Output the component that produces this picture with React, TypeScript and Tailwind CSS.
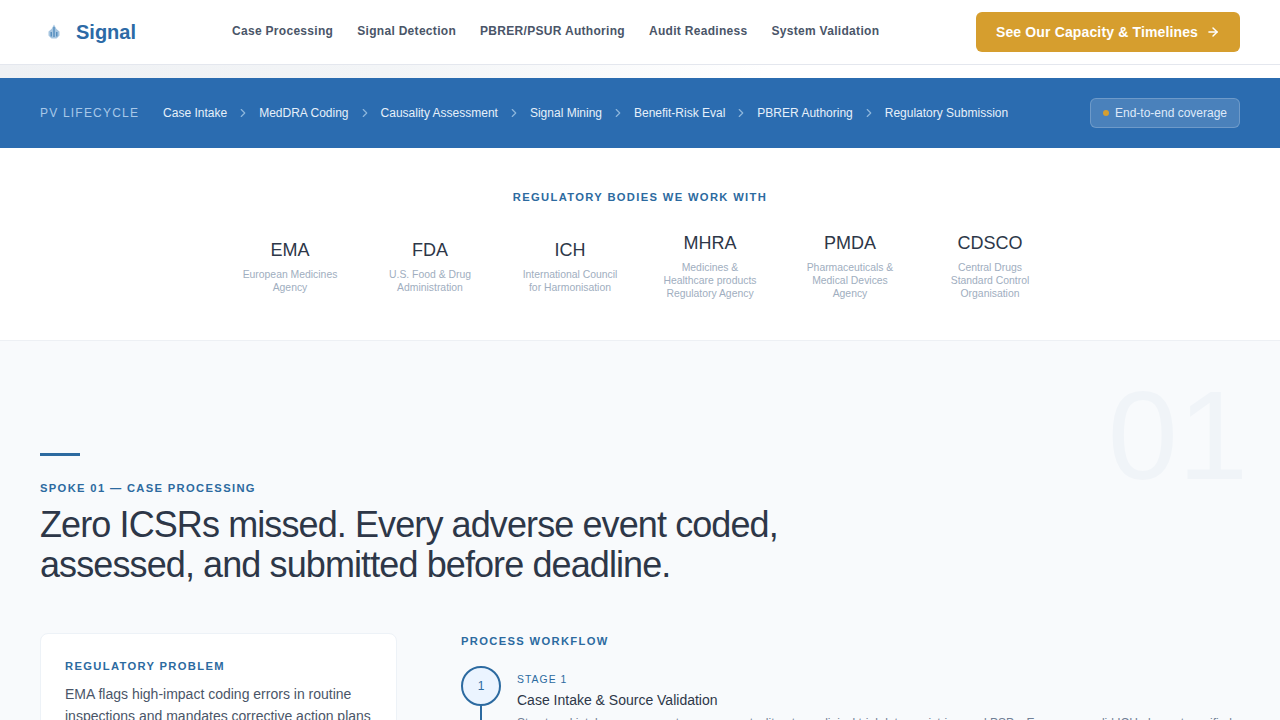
import { ArrowRight, ChevronRight } from "lucide-react";

const navLinks = ["Case Processing", "Signal Detection", "PBRER/PSUR Authoring", "Audit Readiness", "System Validation"];
const stages = ["Case Intake", "MedDRA Coding", "Causality Assessment", "Signal Mining", "Benefit-Risk Eval", "PBRER Authoring", "Regulatory Submission"];
const bodies = [
  { code: "EMA", lines: ["European Medicines", "Agency"] },
  { code: "FDA", lines: ["U.S. Food & Drug", "Administration"] },
  { code: "ICH", lines: ["International Council", "for Harmonisation"] },
  { code: "MHRA", lines: ["Medicines &", "Healthcare products", "Regulatory Agency"] },
  { code: "PMDA", lines: ["Pharmaceuticals &", "Medical Devices", "Agency"] },
  { code: "CDSCO", lines: ["Central Drugs", "Standard Control", "Organisation"] },
];

function Logo() {
  return (
    <svg width="16" height="16" viewBox="0 0 16 16" className="mr-[14px]">
      <path d="M8 0.5 L10.5 5 L13.5 7.5 L13.5 11.5 L10.5 14.5 H5.5 L2.5 11.5 L2.5 7.5 L5.5 5 Z" fill="#a6c5e0" />
      <path d="M8 3 V13 M5.2 8 V12.5 M10.8 8 V12.5" stroke="#4583b8" strokeWidth="1.2" fill="none" />
    </svg>
  );
}

export default function App() {
  return (
    <div className="h-[720px] overflow-hidden bg-white font-['Liberation_Sans',Arial,sans-serif] text-[#2d3748]">
      <header className="flex h-[65px] items-center border-b border-[#e4e7ee] bg-white pl-[46px] pr-10">
        <div className="flex w-[186px] items-center">
          <Logo />
          <span className="text-[20px] font-bold text-[#2c6aa6]">Signal</span>
        </div>
        <nav className="flex flex-1 gap-6 pb-[2px]">
          {navLinks.map((l) => (
            <span key={l} className="text-[12px] font-bold tracking-[0.3px] text-[#4a5568]">{l}</span>
          ))}
        </nav>
        <button className="flex h-10 w-[264px] items-center justify-center gap-2 rounded-md bg-[#d69e2e] text-[14px] font-bold tracking-[0.14px] text-white">
          See Our Capacity &amp; Timelines
          <ArrowRight size={14} strokeWidth={2.5} />
        </button>
      </header>

      <div className="h-[13px] bg-gradient-to-r from-[#eff1f4] via-[#f3f5f7] via-30% to-white to-60%" />

      <section className="flex h-[70px] items-center bg-[#2b6cb0] px-10">
        <span className="mr-6 text-[12px] tracking-[1.2px] text-[#a8c8e8]">PV LIFECYCLE</span>
        <div className="flex flex-1 items-center">
          {stages.map((s, i) => (
            <div key={s} className="flex items-center">
              {i > 0 && <ChevronRight size={14} strokeWidth={2} className="mx-[9px] text-[#8db6dc]" />}
              <span className="text-[12px] text-[#e6f0fa]">{s}</span>
            </div>
          ))}
        </div>
        <div className="flex h-[30px] w-[150px] items-center justify-center gap-[6px] rounded-md border border-white/20 bg-white/15 text-[12px] text-[#dfeafa]">
          <span className="h-[6px] w-[6px] rounded-full bg-[#d69e2e]" />
          End-to-end coverage
        </div>
      </section>

      <section className="h-[193px] border-b border-[#edf0f4] bg-white pt-[41px]">
        <p className="text-center text-[11.2px] font-bold tracking-[1.344px] text-[#2c6aa0]">REGULATORY BODIES WE WORK WITH</p>
        <div className="mt-[15px] flex h-[91px] items-center justify-center">
          {bodies.map((b) => (
            <div key={b.code} className="flex w-[140px] flex-col items-center text-center">
              <span className="text-[18px] leading-[22px] text-[#2d3748]">{b.code}</span>
              <div className="mt-[7px] text-[10.4px] leading-[13px] text-[#a0aec0]">
                {b.lines.map((t) => <div key={t}>{t}</div>)}
              </div>
            </div>
          ))}
        </div>
      </section>

      <main className="relative bg-[#f8fafc] px-10 pt-[112px]">
        <span className="absolute right-[32px] top-[32px] text-[126px] leading-[126px] text-[#f0f4f8]">01</span>
        <div className="h-[3px] w-10 bg-[#2c6aa0]" />
        <p className="mt-[24px] text-[11.2px] font-bold tracking-[1.344px] text-[#2c6aa0]">SPOKE 01 — CASE PROCESSING</p>
        <h1 className="relative mt-[8px] w-[800px] text-[36px] leading-[40px] tracking-[-0.9px] text-[#2d3748]">
          Zero ICSRs missed. Every adverse event coded, assessed, and submitted before deadline.
        </h1>
        <div className="mt-[48px] flex">
          <div className="mr-[64px] h-[200px] w-[357px] shrink-0 rounded-lg border border-[#edf2f7] bg-white px-6 pt-6">
            <p className="text-[11.2px] font-bold tracking-[1.344px] text-[#2c6aa0]">REGULATORY PROBLEM</p>
            <p className="mt-[8px] text-[14px] leading-[22.4px] text-[#4a5568]">
              EMA flags high-impact coding errors in routine inspections and mandates corrective action plans
            </p>
          </div>
          <div className="min-w-0 flex-1">
            <p className="text-[11.2px] font-bold tracking-[1.344px] text-[#2c6aa0]">PROCESS WORKFLOW</p>
            <div className="mt-[16px] flex gap-4">
              <div className="flex flex-col items-center">
                <div className="flex h-10 w-10 items-center justify-center rounded-full border-2 border-[#2c6aa0] bg-[#ebf4ff] text-[12px] text-[#2c6aa0]">1</div>
                <div className="h-10 w-[2px] bg-[#2c6aa0]" />
              </div>
              <div className="min-w-0 pt-[6px]">
                <p className="text-[10.4px] tracking-[1.04px] text-[#2c6aa0]">STAGE 1</p>
                <p className="mt-[3px] text-[14px] text-[#2d3748]">Case Intake &amp; Source Validation</p>
                <p className="mt-[3px] whitespace-nowrap text-[12px] text-[#718096]">Structured intake across spontaneous reports, literature, clinical trial data, registries, and PSPs. Every case valid ICH elements verified</p>
              </div>
            </div>
          </div>
        </div>
      </main>
    </div>
  );
}
